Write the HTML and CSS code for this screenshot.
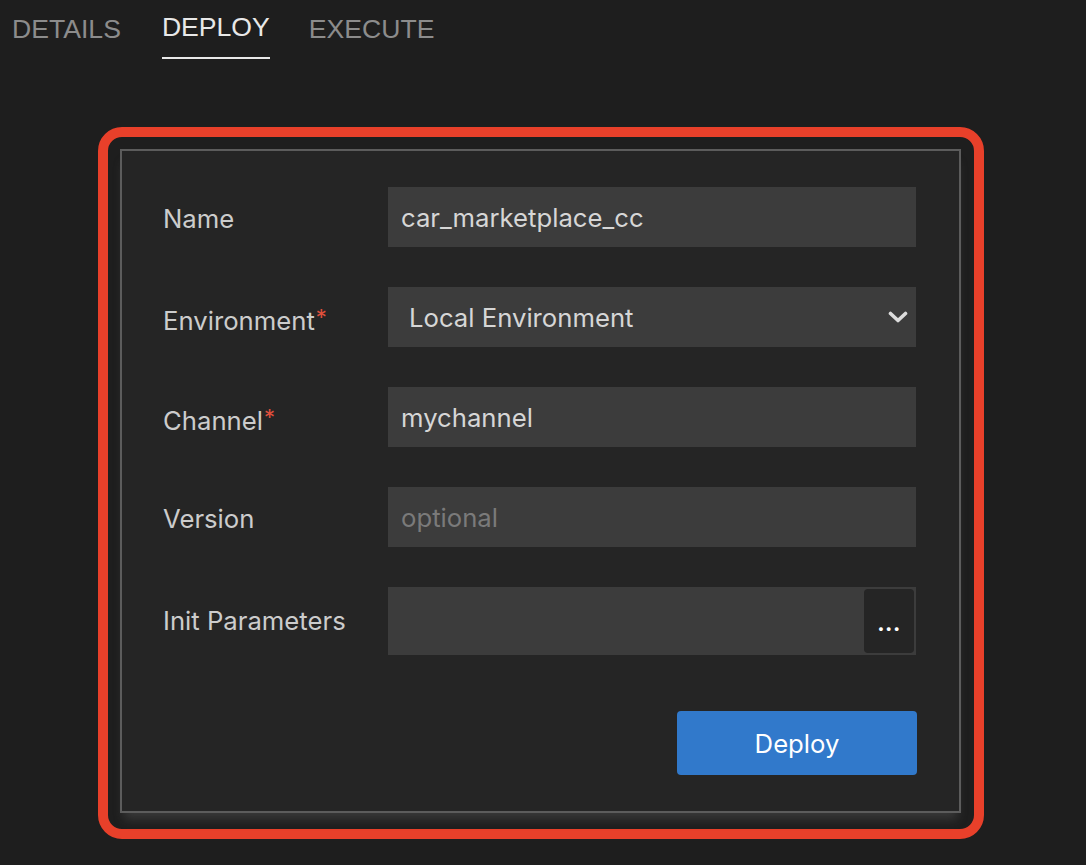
FILE: index.html
```html
<!DOCTYPE html>
<html lang="en">
<head>
<meta charset="utf-8">
<title>Deploy</title>
<link rel="stylesheet" href="styles.css">
</head>
<body>
<nav class="tabs">
  <div class="tab">DETAILS</div>
  <div class="tab tab-active">DEPLOY</div>
  <div class="tab">EXECUTE</div>
</nav>
<div class="highlight">
  <form class="panel">
    <div class="fields">
      <label class="label">Name</label>
      <input class="field" type="text" value="car_marketplace_cc">

      <label class="label">Environment<span class="req">*</span></label>
      <div class="field select">
        <span>Local Environment</span>
        <svg class="chevron" width="20" height="12" viewBox="0 0 20 12"><path d="M2.5 2.5 L10 9.5 L17.5 2.5" fill="none" stroke="#dcdcdc" stroke-width="3.6" stroke-linecap="round" stroke-linejoin="round"/></svg>
      </div>

      <label class="label">Channel<span class="req">*</span></label>
      <input class="field" type="text" value="mychannel">

      <label class="label">Version</label>
      <input class="field" type="text" placeholder="optional">

      <label class="label">Init Parameters</label>
      <div class="field params">
        <button type="button" class="more">...</button>
      </div>
    </div>
    <div class="actions">
      <button type="button" class="deploy">Deploy</button>
    </div>
  </form>
</div>
</body>
</html>
```

FILE: styles.css
```css
* { box-sizing: border-box; }
html, body { margin: 0; padding: 0; }
body {
  background: #1e1e1e;
  width: 1086px;
  height: 865px;
  overflow: hidden;
  font-family: Inter, "Noto Sans", sans-serif;
}
.tabs {
  display: flex;
  align-items: flex-start;
  padding: 12px 0 0 12px;
  gap: 41px;
  font-family: "Liberation Sans", Arial, sans-serif;
  font-size: 26.6px;
  line-height: 30px;
}
.tab {
  color: #8c8c8c;
  padding-top: 2px;
}
.tab-active {
  color: #e8e8e8;
  padding-top: 0;
  padding-bottom: 15px;
  margin-right: -2px;
  border-bottom: 2px solid #e8e8e8;
}
.highlight {
  margin: 68px 0 0 98px;
  width: 886px;
  border: 10px solid #e8402a;
  border-radius: 24px;
  padding: 12px 13px 16px 12px;
}
.panel {
  margin: 0;
  background: #252525;
  border: 2px solid #5c5c5c;
  padding: 36px 42px 36px 41px;
  box-shadow: 0 10px 10px -4px rgba(110,110,110,0.35);
}
.fields {
  display: grid;
  grid-template-columns: 225px 528px;
  grid-template-rows: 60px 60px 60px 60px 68px;
  row-gap: 40px;
  align-items: center;
}
.label {
  color: #cccccc;
  font-size: 25.7px;
  line-height: 30px;
  padding-top: 4px;
}
.label:nth-last-child(2) { padding-top: 0; }
.req {
  color: #e0503c;
  font-size: 22px;
  vertical-align: 5px;
  margin-left: 1px;
}
.field {
  height: 60px;
  width: 528px;
  background: #3c3c3c;
  border: none;
  outline: none;
  color: #d6d6d6;
  font-family: inherit;
  font-size: 25.7px;
  padding: 0 13px;
  margin: 0;
}
.field::placeholder { color: #7a7a7a; }
.select {
  display: flex;
  align-items: center;
  justify-content: space-between;
  padding: 0 8px 0 21px;
}
.params {
  height: 68px;
  display: flex;
  justify-content: flex-end;
  align-items: stretch;
  padding: 2px;
}
.more {
  width: 50px;
  background: #252525;
  border: none;
  border-radius: 4px;
  color: #ffffff;
  font-family: inherit;
  font-size: 22px;
  font-weight: 700;
  letter-spacing: 0.5px;
  padding: 4px 0 0 0;
  line-height: 1;
}
.actions {
  display: flex;
  justify-content: flex-end;
  margin-top: 56px;
}
.deploy {
  width: 240px;
  height: 64px;
  background: #3179cb;
  border: none;
  border-radius: 4px;
  color: #ffffff;
  font-family: inherit;
  font-size: 25.7px;
}
```
